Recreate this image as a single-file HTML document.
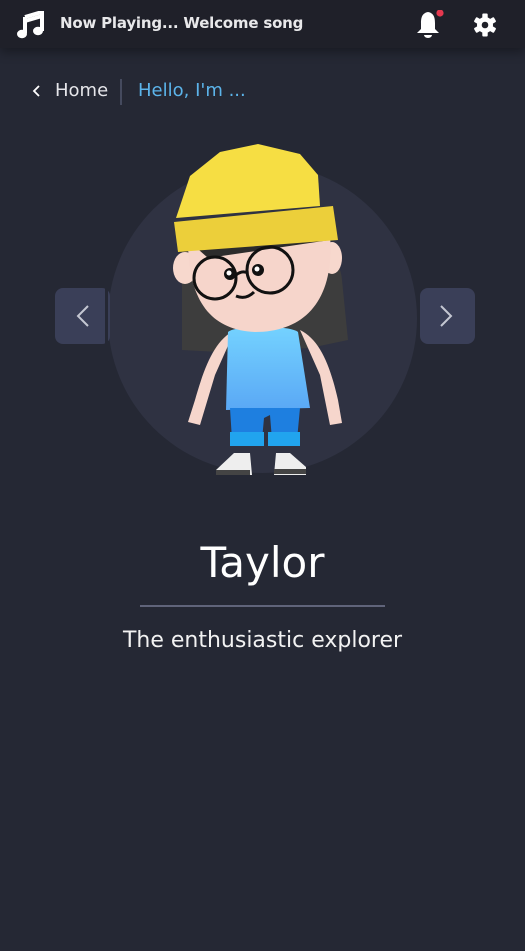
<!DOCTYPE html>
<html><head><meta charset="utf-8"><style>
*{margin:0;padding:0;box-sizing:border-box}
body{width:525px;height:951px;background:#252834;font-family:"DejaVu Sans","Liberation Sans",sans-serif;overflow:hidden;position:relative;color:#fff}
.hdr{position:absolute;left:0;top:0;width:525px;height:48px;background:#1f2029;box-shadow:0 4px 10px rgba(0,0,0,.35)}
.np{position:absolute;left:60px;top:14px;font-size:15px;font-weight:bold;color:#e8e8ea;letter-spacing:-.2px}
.bc{position:absolute;top:80px;font-size:18px}
.btn{position:absolute;top:288px;width:55px;height:56px;background:#3a3f58;border-radius:8px}
</style></head><body>
<div class="hdr">
<svg style="position:absolute;left:17px;top:11px" width="27" height="28" viewBox="0 0 27 28"><path d="M8 6 L25 1 V20" stroke="#fff" stroke-width="4" fill="none"/><path d="M8 6 V22" stroke="#fff" stroke-width="4"/><path d="M8 10 L25 5" stroke="#fff" stroke-width="4"/><ellipse cx="5" cy="23" rx="5" ry="4.2" fill="#fff"/><ellipse cx="21" cy="20" rx="5" ry="4.2" fill="#fff"/></svg>
<div class="np">Now Playing... Welcome song</div>
<svg style="position:absolute;left:415px;top:10px" width="32" height="30" viewBox="0 0 32 30"><path d="M13 2 C7 3 6 8 6 13 V19 L2 23 H24 L20 19 V13 C20 8 19 3 13 2Z" fill="#fff"/><path d="M9 25 A4 3 0 0 0 17 25Z" fill="#fff"/><circle cx="25" cy="3" r="3.6" fill="#e5384f"/></svg>
<svg style="position:absolute;left:473px;top:13px" width="24" height="24" viewBox="0 0 24 24"><g fill="#fff"><circle cx="12" cy="12" r="8"/><g id="t"><rect x="9.3" y="0.5" width="5.4" height="5" rx="1"/><rect x="9.3" y="18.5" width="5.4" height="5" rx="1"/></g><use href="#t" transform="rotate(60 12 12)"/><use href="#t" transform="rotate(120 12 12)"/></g><circle cx="12" cy="12" r="3.3" fill="#1f2029"/></svg>
</div>
<svg style="position:absolute;left:31px;top:84px" width="10" height="14" viewBox="0 0 10 14"><path d="M8 2 L3 7 L8 12" stroke="#fff" stroke-width="1.8" fill="none"/></svg>
<div class="bc" style="left:55px;color:#e6e6ea">Home</div>
<div style="position:absolute;left:120px;top:79px;width:2px;height:26px;background:#454a5e"></div>
<div class="bc" style="left:138px;color:#5cb4ea">Hello, I'm ...</div>
<div style="position:absolute;left:108px;top:164px;width:309px;height:309px;border-radius:50%;background:#2f3242"></div>
<div class="btn" style="left:55px"></div>
<div class="btn" style="left:420px"></div>
<div style="position:absolute;left:105px;top:280px;width:3px;height:70px;background:#252834"></div>
<svg style="position:absolute;left:75px;top:304px" width="16" height="24" viewBox="0 0 16 24"><path d="M13 2 L3 12 L13 22" stroke="#c4c7d2" stroke-width="2" fill="none"/></svg>
<svg style="position:absolute;left:438px;top:304px" width="16" height="24" viewBox="0 0 16 24"><path d="M3 2 L13 12 L3 22" stroke="#c4c7d2" stroke-width="2" fill="none"/></svg>
<svg style="position:absolute;left:160px;top:140px" width="200" height="345" viewBox="0 0 200 345">
<defs><linearGradient id="s" x1="0" y1="0" x2="0" y2="1"><stop offset="0" stop-color="#74d2ff"/><stop offset="1" stop-color="#5aa8f5"/></linearGradient></defs>
<path d="M22 140 C20 110 40 100 90 100 C150 100 180 110 182 140 L188 200 L150 208 L60 212 L22 210Z" fill="#3d3d3d"/>
<path d="M75 190 C55 200 45 225 35 260 L28 282 L40 285 L55 235 Z" fill="#f6d6cc"/>
<path d="M140 190 C160 200 170 225 178 260 L182 283 L170 285 L160 235 Z" fill="#f6d6cc"/>
<path d="M68 192 C75 185 130 185 138 192 L150 268 L66 270Z" fill="url(#s)"/>
<path d="M70 268 H140 L137 300 H112 L110 275 L104 278 L102 300 H72Z" fill="#1e7fe0"/>
<rect x="70" y="292" width="34" height="14" fill="#21a4ee"/><rect x="108" y="292" width="32" height="14" fill="#21a4ee"/>
<path d="M56 330 L74 313 H90 L92 335 H56Z" fill="#eee"/><path d="M116 313 H130 L146 327 V335 H114Z" fill="#eee"/>
<rect x="56" y="330" width="34" height="5" fill="#444"/><rect x="114" y="329" width="32" height="5" fill="#444"/>
<ellipse cx="25" cy="128" rx="12" ry="16" fill="#f7d8cd"/><ellipse cx="172" cy="118" rx="10" ry="16" fill="#f7d8cd"/>
<path d="M28 100 C28 160 50 190 95 192 C145 192 175 160 170 95 Z" fill="#f6d5cb"/>
<path d="M30 102 L48 118 L170 100Z" fill="#2c2c2c"/>
<path d="M16 78 L160 66 L158 35 L140 14 L98 4 L60 12 L30 36 Z" fill="#f6de43"/>
<path d="M14 82 L173 66 L178 100 L18 112Z" fill="#eccf3a"/>
<circle cx="55" cy="138" r="21" fill="none" stroke="#111" stroke-width="3"/>
<circle cx="110" cy="130" r="23" fill="none" stroke="#111" stroke-width="3"/>
<path d="M76 135 Q82 130 88 133" stroke="#111" stroke-width="3" fill="none"/>
<circle cx="70" cy="134" r="6" fill="#111"/><circle cx="69" cy="133" r="2.5" fill="#fff"/>
<circle cx="98" cy="130" r="6" fill="#111"/><circle cx="97" cy="129" r="2.5" fill="#fff"/>
<path d="M76 156 Q86 160 94 152" stroke="#111" stroke-width="3" fill="none"/>
</svg>
<div style="position:absolute;left:0;width:525px;top:538px;text-align:center;font-size:42px;color:#fff">Taylor</div>
<div style="position:absolute;left:140px;top:605px;width:245px;height:2px;background:#60647a"></div>
<div style="position:absolute;left:0;width:525px;top:628px;text-align:center;font-size:22px;color:#f2f2f2">The enthusiastic explorer</div>
</body></html>
